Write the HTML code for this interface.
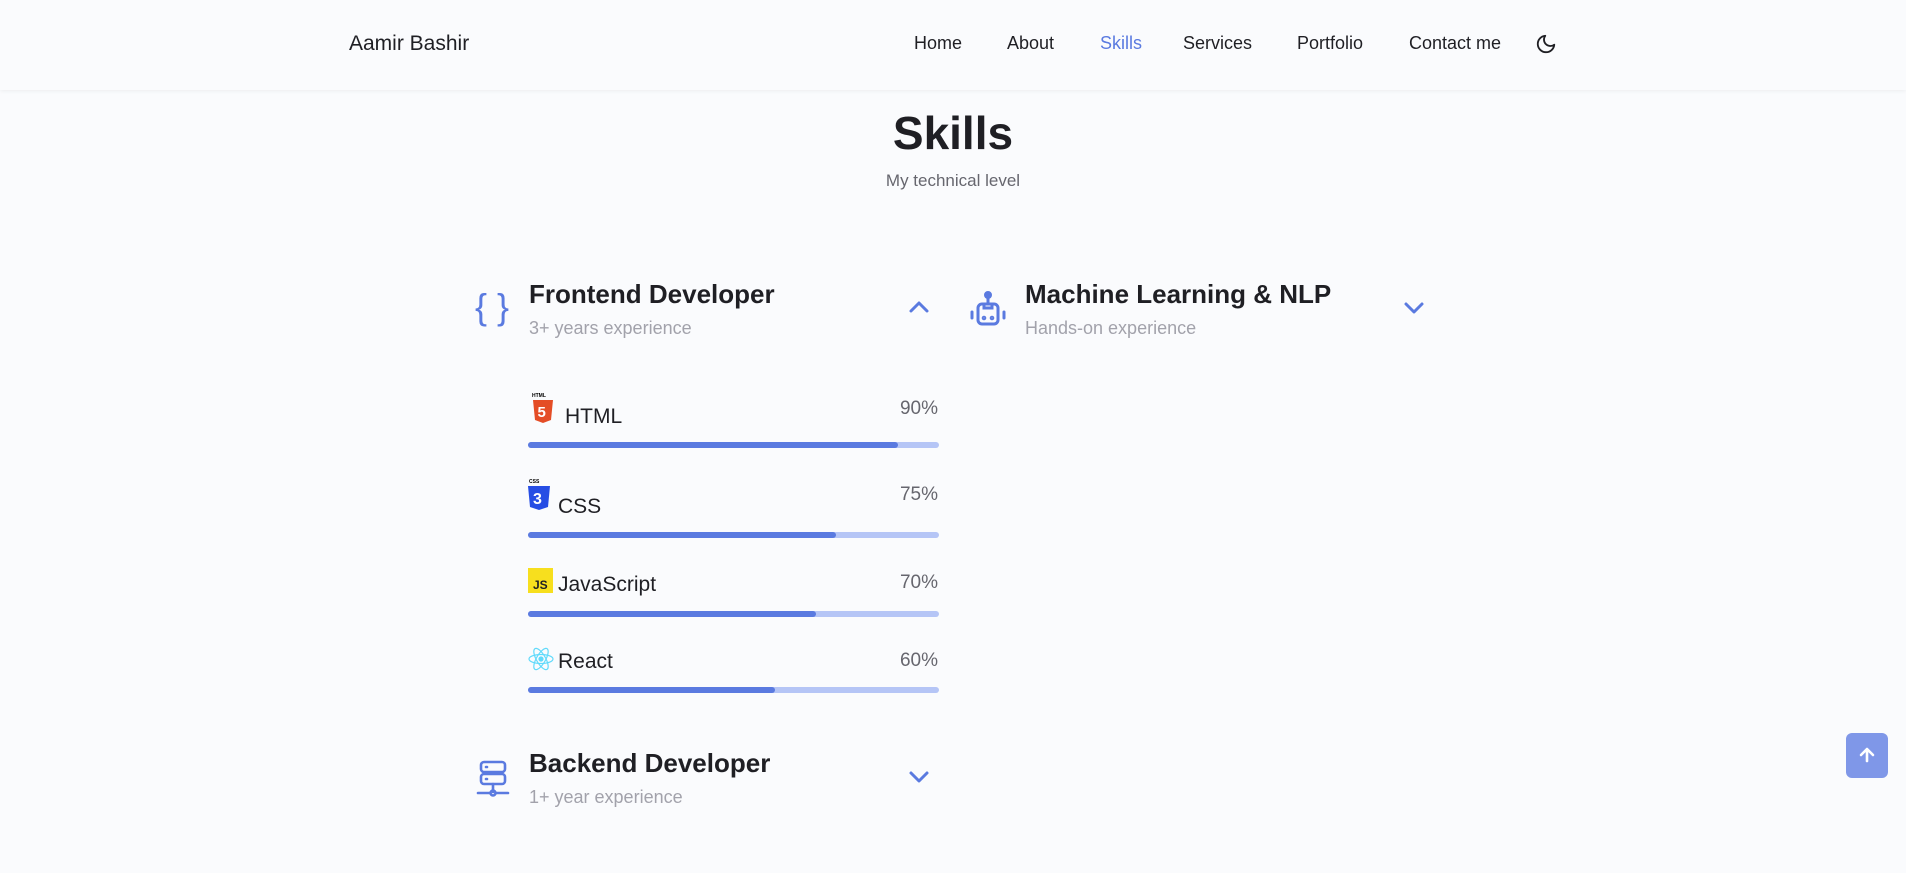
<!DOCTYPE html>
<html><head><meta charset="utf-8"><style>
*{margin:0;padding:0;box-sizing:border-box}
body{width:1906px;height:873px;background:#fafbfd;font-family:"Liberation Sans",sans-serif;color:#1f1f24;position:relative;overflow:hidden}
.hdr{position:absolute;left:0;top:0;width:1906px;height:90px;background:#fafbfd;box-shadow:0 1px 4px rgba(0,0,0,.06)}
.abs{position:absolute;white-space:nowrap}
.nav{font-size:18px;top:33px;color:#1f1f24}
.t{font-size:26px;font-weight:bold}
.s{font-size:18px;color:#a2a2ab}
.bar{position:absolute;left:528px;width:411px;height:6px;border-radius:3px;background:#b5c5f6}
.bar i{display:block;height:6px;border-radius:3px;background:#5a7ae0}
.lab{font-size:21px}
.pct{font-size:19px;color:#66666e;right:968px}
</style></head><body>
<div class="hdr"></div>
<div class="abs" style="left:349px;top:32px;font-size:21px">Aamir Bashir</div>
<div class="abs nav" style="left:914px">Home</div>
<div class="abs nav" style="left:1007px">About</div>
<div class="abs nav" style="left:1100px;color:#5a7ae0">Skills</div>
<div class="abs nav" style="left:1183px">Services</div>
<div class="abs nav" style="left:1297px">Portfolio</div>
<div class="abs nav" style="left:1409px">Contact me</div>
<svg class="abs" style="left:1535px;top:33px" width="22" height="22" viewBox="0 0 24 24" fill="none" stroke="#1f1f24" stroke-width="2" stroke-linecap="round" stroke-linejoin="round"><path d="M21 12.8A9 9 0 1 1 11.2 3a7 7 0 0 0 9.8 9.8z"/></svg>

<div class="abs" style="left:0;width:1906px;text-align:center;top:106px;font-size:46px;font-weight:bold">Skills</div>
<div class="abs" style="left:0;width:1906px;text-align:center;top:171px;font-size:17px;color:#66666e">My technical level</div>

<!-- Frontend -->
<div class="abs" style="left:475px;top:286px;font-size:36px;color:#5a7ae0;letter-spacing:10px">{}</div>
<div class="abs t" style="left:529px;top:279px">Frontend Developer</div>
<div class="abs s" style="left:529px;top:318px">3+ years experience</div>
<svg class="abs" style="left:908px;top:299px" width="22" height="16" viewBox="0 0 22 16" fill="none" stroke="#5a7ae0" stroke-width="3" stroke-linecap="round" stroke-linejoin="round"><path d="M3 12l8-8 8 8"/></svg>

<!-- ML -->
<svg class="abs" style="left:969px;top:291px" width="38" height="38" viewBox="0 0 38 38" fill="none" stroke="#5a7ae0" stroke-width="3" stroke-linecap="round"><circle cx="19" cy="4" r="2.5" fill="#5a7ae0"/><path d="M19 6v6"/><rect x="9" y="13" width="20" height="20" rx="4"/><path d="M15 13v4h8v-4"/><path d="M3 21v6M35 21v6"/><circle cx="15" cy="27" r=".8" fill="#5a7ae0"/><circle cx="23" cy="27" r=".8" fill="#5a7ae0"/></svg>
<div class="abs t" style="left:1025px;top:279px">Machine Learning &amp; NLP</div>
<div class="abs s" style="left:1025px;top:318px">Hands-on experience</div>
<svg class="abs" style="left:1403px;top:300px" width="22" height="16" viewBox="0 0 22 16" fill="none" stroke="#5a7ae0" stroke-width="3" stroke-linecap="round" stroke-linejoin="round"><path d="M3 4l8 8 8-8"/></svg>

<!-- HTML -->
<svg class="abs" style="left:532px;top:392px" width="22" height="33" viewBox="0 0 22 33"><text x="0" y="5" font-size="5" font-weight="bold" font-family="Liberation Sans">HTML</text><path d="M1 8h20l-2 20-8 3-8-3z" fill="#e44d26"/><text x="5.5" y="25" font-size="15" font-weight="bold" fill="#fff" font-family="Liberation Sans">5</text></svg>
<div class="abs lab" style="left:565px;top:405px">HTML</div>
<div class="abs pct" style="top:398px">90%</div>
<div class="bar" style="top:442px"><i style="width:90%"></i></div>
<!-- CSS -->
<svg class="abs" style="left:527px;top:478px" width="24" height="33" viewBox="0 0 24 33"><text x="2" y="5" font-size="5" font-weight="bold" font-family="Liberation Sans">CSS</text><path d="M1 8h22l-2 21-9 3-9-3z" fill="#264de4"/><text x="6" y="26" font-size="16" font-weight="bold" fill="#fff" font-family="Liberation Sans">3</text></svg>
<div class="abs lab" style="left:558px;top:495px">CSS</div>
<div class="abs pct" style="top:484px">75%</div>
<div class="bar" style="top:532px"><i style="width:75%"></i></div>
<!-- JS -->
<div class="abs" style="left:528px;top:568px;width:25px;height:25px;background:#f7df1e;font-size:12px;font-weight:bold;padding:10px 0 0 5px">JS</div>
<div class="abs lab" style="left:558px;top:573px">JavaScript</div>
<div class="abs pct" style="top:572px">70%</div>
<div class="bar" style="top:611px"><i style="width:70%"></i></div>
<!-- React -->
<svg class="abs" style="left:528px;top:647px" width="26" height="24" viewBox="-13 -12 26 24" fill="none" stroke="#61dafb" stroke-width="1.2"><ellipse rx="12" ry="4.5"/><ellipse rx="12" ry="4.5" transform="rotate(60)"/><ellipse rx="12" ry="4.5" transform="rotate(120)"/><circle r="2" fill="#61dafb"/></svg>
<div class="abs lab" style="left:558px;top:650px">React</div>
<div class="abs pct" style="top:650px">60%</div>
<div class="bar" style="top:687px"><i style="width:60%"></i></div>

<!-- Backend -->
<svg class="abs" style="left:476px;top:760px" width="34" height="38" viewBox="0 0 34 38" fill="none" stroke="#5a7ae0" stroke-width="2.6" stroke-linecap="round"><rect x="5" y="2" width="24" height="10" rx="3"/><rect x="5" y="14" width="24" height="10" rx="3"/><path d="M10 7h1M10 19h1M17 24v8M2 33h12M20 33h12"/><circle cx="17" cy="33" r="2.5"/></svg>
<div class="abs t" style="left:529px;top:748px">Backend Developer</div>
<div class="abs s" style="left:529px;top:787px">1+ year experience</div>
<svg class="abs" style="left:908px;top:769px" width="22" height="16" viewBox="0 0 22 16" fill="none" stroke="#5a7ae0" stroke-width="3" stroke-linecap="round" stroke-linejoin="round"><path d="M3 4l8 8 8-8"/></svg>

<div class="abs" style="left:1846px;top:733px;width:42px;height:45px;border-radius:6px;background:#7f97e8"></div>
<svg class="abs" style="left:1858px;top:746px" width="18" height="18" viewBox="0 0 18 18" fill="none" stroke="#fff" stroke-width="2.6" stroke-linecap="round" stroke-linejoin="round"><path d="M9 15V3M3 9l6-6 6 6"/></svg>
</body></html>
